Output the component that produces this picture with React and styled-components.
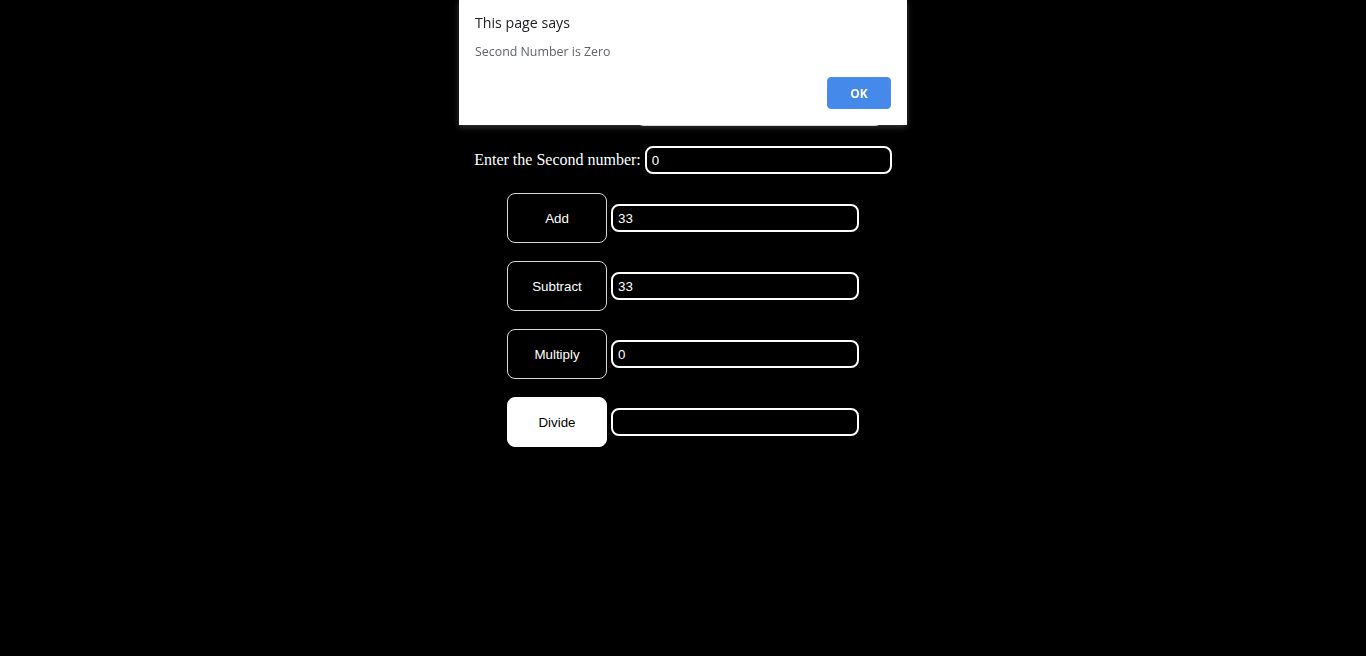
import React from "react";
import styled, { createGlobalStyle } from "styled-components";

const Global = createGlobalStyle`
  html, body { margin: 0; padding: 0; background: #000; height: 100%; }
  body { font-family: "Liberation Serif", serif; color: #fff; }
  #root { min-height: 656px; background: #000; }
`;

const Page = styled.div`
  display: flex;
  flex-direction: column;
  align-items: center;
  padding-top: 98px;
`;

const FieldRow = styled.div`
  display: flex;
  align-items: center;
  gap: 4px;
  margin-bottom: ${(p) => p.$mb || 0}px;
`;

const Label = styled.label`
  font-family: "Liberation Serif", serif;
  font-size: 16px;
  color: #fff;
`;

const Input = styled.input`
  box-sizing: border-box;
  width: ${(p) => p.$w || 247}px;
  height: 28px;
  background: #000;
  color: #fff;
  border: 2px solid #fff;
  border-radius: 8px;
  padding: 0 5px;
  font-family: "Liberation Sans", Arial, sans-serif;
  font-size: 13.33px;
  outline: none;
`;

const OpRow = styled.div`
  display: flex;
  align-items: center;
  gap: 4px;
  margin-bottom: 18px;
`;

const OpButton = styled.button`
  box-sizing: border-box;
  width: 100px;
  height: 50px;
  border-radius: 8px;
  border: 1px solid ${(p) => (p.$active ? "#fff" : "#d8d8d8")};
  background: ${(p) => (p.$active ? "#fff" : "#000")};
  color: ${(p) => (p.$active ? "#000" : "#fff")};
  font-family: "Liberation Sans", Arial, sans-serif;
  font-size: 13.33px;
  cursor: pointer;
`;

const Dialog = styled.div`
  position: fixed;
  top: 0;
  left: 459px;
  width: 448px;
  height: 125px;
  box-sizing: border-box;
  background: #fff;
  padding: 14px 16px 16px 16px;
  box-shadow: 0 2px 6px rgba(128, 128, 128, 0.45);
  display: flex;
  flex-direction: column;
  font-family: "Open Sans", "Noto Sans", sans-serif;
`;

const DialogTitle = styled.div`
  font-size: 14.2px;
  color: #202124;
  line-height: 18px;
`;

const DialogMessage = styled.div`
  margin-top: 12px;
  font-size: 12.4px;
  color: #5f6368;
  line-height: 16px;
`;

const DialogActions = styled.div`
  margin-top: auto;
  display: flex;
  justify-content: flex-end;
`;

const OkButton = styled.button`
  width: 64px;
  height: 32px;
  border: 1px solid #4a8fe8;
  border-radius: 4px;
  background: #4589ea;
  color: #fff;
  font-family: "Open Sans", "Noto Sans", sans-serif;
  font-weight: 700;
  font-size: 12px;
  cursor: pointer;
`;

const ops = [
  { name: "Add", value: "33" },
  { name: "Subtract", value: "33" },
  { name: "Multiply", value: "0" },
  { name: "Divide", value: "", active: true },
];

export default function App() {
  return (
    <>
      <Global />
      <Page>
        <FieldRow $mb={20}>
          <Label>Enter the First number:</Label>
          <Input defaultValue="33" />
        </FieldRow>
        <FieldRow $mb={19}>
          <Label>Enter the Second number:</Label>
          <Input defaultValue="0" />
        </FieldRow>
        {ops.map((op) => (
          <OpRow key={op.name}>
            <OpButton $active={op.active}>{op.name}</OpButton>
            <Input $w={248} defaultValue={op.value} />
          </OpRow>
        ))}
      </Page>
      <Dialog>
        <DialogTitle>This page says</DialogTitle>
        <DialogMessage>Second Number is Zero</DialogMessage>
        <DialogActions>
          <OkButton>OK</OkButton>
        </DialogActions>
      </Dialog>
    </>
  );
}
